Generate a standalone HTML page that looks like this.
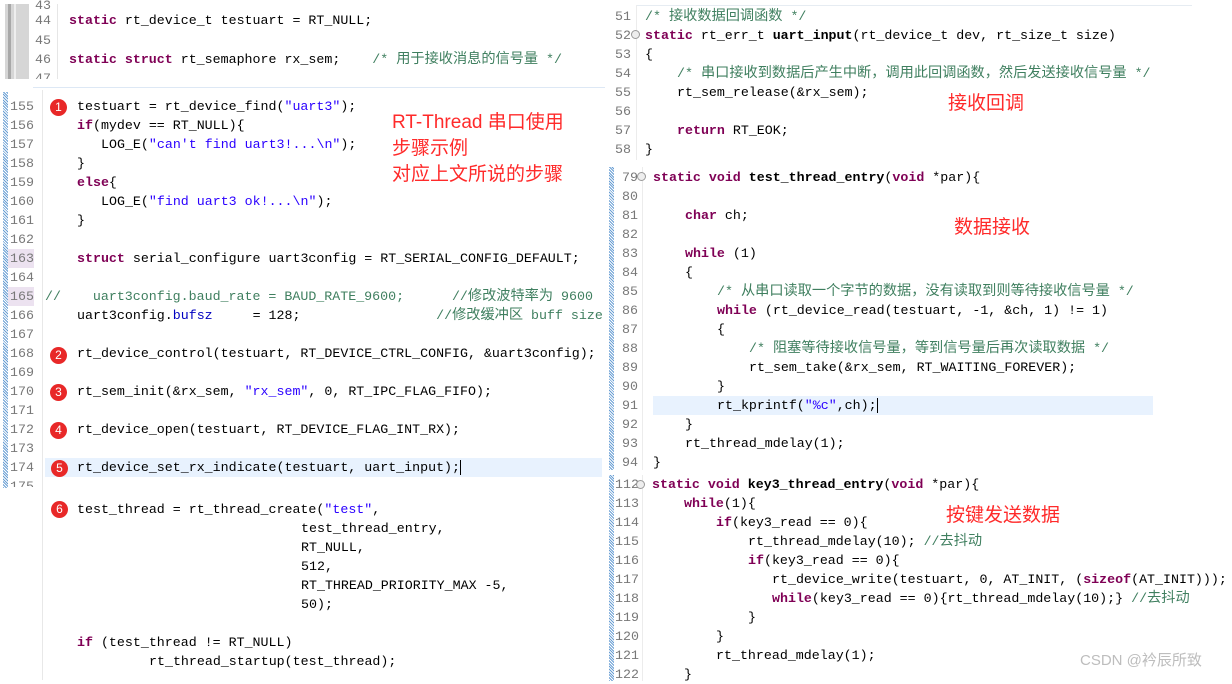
<!DOCTYPE html>
<html><head><meta charset="utf-8"><style>
html{background:#fff}
body{margin:0;width:1232px;height:680px;background:#fff;position:relative;top:1px;overflow:hidden;font-family:"Liberation Mono","Noto Sans CJK SC",monospace}
.l{position:absolute;white-space:pre;font-size:13.3px;line-height:19px;color:#000;height:19px}
.n{position:absolute;white-space:pre;font-size:13.3px;line-height:19px;color:#787878}
.k{color:#7f0055;font-weight:bold}
.s{color:#2a00ff}
.c{color:#3f7f5f;font-family:"Liberation Mono","Noto Sans CJK SC",monospace}
.c i{font-style:normal;font-size:14.2px}
.f{color:#0000c0}
.b{font-weight:bold}
.r{position:absolute;color:#ff2a2a;font-family:"Liberation Sans","Noto Sans CJK SC",sans-serif;font-size:19px;line-height:25px;white-space:pre}
.dot{position:absolute;width:17px;height:17px;border-radius:50%;background:#e82828;color:#fff;font:12px/17px "Liberation Sans",sans-serif;text-align:center}
.gut{position:absolute;background:repeating-linear-gradient(45deg,#6a9fd4 0 1px,#fff 1px 2px)}
.hl{position:absolute;background:#e8f2fe}
</style></head><body>
<!-- top-left panel -->
<div style="position:absolute;left:5px;top:3px;width:24px;height:75px;background:#d6d6d6"></div>
<div style="position:absolute;left:8px;top:3px;width:3px;height:75px;background:#a8a8a8"></div>
<div style="position:absolute;left:14px;top:3px;width:2px;height:75px;background:#eee"></div>
<div style="position:absolute;left:57px;top:3px;width:1px;height:75px;background:#e6e6e6"></div>
<div class="n" style="top:-5px;left:35px">43</div>
<div class="n" style="top:10px;left:35px">44</div><div class="l" style="top:10px;left:69px"><span class="k">static</span> rt_device_t testuart = RT_NULL;</div>
<div class="n" style="top:30px;left:35px">45</div>
<div class="n" style="top:49px;left:35px">46</div><div class="l" style="top:49px;left:69px"><span class="k">static struct</span> rt_semaphore rx_sem;    <span class="c">/* <i>用于接收消息的信号量</i> */</span></div>
<div class="n" style="top:68px;left:35px">47</div>
<div style="position:absolute;left:0;top:78px;width:600px;height:8px;background:#fff"></div>
<div style="position:absolute;left:33px;top:86px;width:572px;height:1px;background:#dde8f5"></div>
<!-- bottom-left panel -->
<div class="gut" style="left:3px;top:91px;width:5px;height:396px"></div>
<div style="position:absolute;left:42px;top:89px;width:1px;height:590px;background:#e8e8e8"></div>
<div style="position:absolute;left:8px;top:248px;width:26px;height:19px;background:#ece2f0"></div>
<div style="position:absolute;left:8px;top:286px;width:26px;height:19px;background:#ece2f0"></div>
<div class="hl" style="left:45px;top:457px;width:557px;height:19px"></div>
<div class="n" style="top:96px;left:10px">155</div>
<div class="n" style="top:115px;left:10px">156</div>
<div class="n" style="top:134px;left:10px">157</div>
<div class="n" style="top:153px;left:10px">158</div>
<div class="n" style="top:172px;left:10px">159</div>
<div class="n" style="top:191px;left:10px">160</div>
<div class="n" style="top:210px;left:10px">161</div>
<div class="n" style="top:229px;left:10px">162</div>
<div class="n" style="top:248px;left:10px">163</div>
<div class="n" style="top:267px;left:10px">164</div>
<div class="n" style="top:286px;left:10px">165</div>
<div class="n" style="top:305px;left:10px">166</div>
<div class="n" style="top:324px;left:10px">167</div>
<div class="n" style="top:343px;left:10px">168</div>
<div class="n" style="top:362px;left:10px">169</div>
<div class="n" style="top:381px;left:10px">170</div>
<div class="n" style="top:400px;left:10px">171</div>
<div class="n" style="top:419px;left:10px">172</div>
<div class="n" style="top:438px;left:10px">173</div>
<div class="n" style="top:457px;left:10px">174</div>
<div class="n" style="top:476px;left:10px;height:10px;overflow:hidden">175</div>
<div class="l" style="top:96px;left:77px">testuart = rt_device_find(<span class="s">"uart3"</span>);</div>
<div class="l" style="top:115px;left:77px"><span class="k">if</span>(mydev == RT_NULL){</div>
<div class="l" style="top:134px;left:101px">LOG_E(<span class="s">"can't find uart3!...\n"</span>);</div>
<div class="l" style="top:153px;left:77px">}</div>
<div class="l" style="top:172px;left:77px"><span class="k">else</span>{</div>
<div class="l" style="top:191px;left:101px">LOG_E(<span class="s">"find uart3 ok!...\n"</span>);</div>
<div class="l" style="top:210px;left:77px">}</div>
<div class="l" style="top:248px;left:77px"><span class="k">struct</span> serial_configure uart3config = RT_SERIAL_CONFIG_DEFAULT;</div>
<div class="l" style="top:286px;left:45px"><span class="c">//    uart3config.baud_rate = BAUD_RATE_9600;      //<i>修改波特率为</i> 9600</span></div>
<div class="l" style="top:305px;left:77px">uart3config.<span class="f">bufsz</span>     = 128;                 <span class="c">//<i>修改缓冲区</i> buff size</span></div>
<div class="l" style="top:343px;left:77px">rt_device_control(testuart, RT_DEVICE_CTRL_CONFIG, &amp;uart3config);</div>
<div class="l" style="top:381px;left:77px">rt_sem_init(&amp;rx_sem, <span class="s">"rx_sem"</span>, 0, RT_IPC_FLAG_FIFO);</div>
<div class="l" style="top:419px;left:77px">rt_device_open(testuart, RT_DEVICE_FLAG_INT_RX);</div>
<div class="l" style="top:457px;left:77px">rt_device_set_rx_indicate(testuart, uart_input);<span style="border-left:1px solid #000"></span></div>
<div class="l" style="top:499px;left:77px">test_thread = rt_thread_create(<span class="s">"test"</span>,</div>
<div class="l" style="top:518px;left:301px">test_thread_entry,</div>
<div class="l" style="top:537px;left:301px">RT_NULL,</div>
<div class="l" style="top:556px;left:301px">512,</div>
<div class="l" style="top:575px;left:301px">RT_THREAD_PRIORITY_MAX -5,</div>
<div class="l" style="top:594px;left:301px">50);</div>
<div class="l" style="top:632px;left:77px"><span class="k">if</span> (test_thread != RT_NULL)</div>
<div class="l" style="top:651px;left:149px">rt_thread_startup(test_thread);</div>
<div style="position:absolute;left:602px;top:87px;width:6px;height:400px;background:#fff"></div>
<div class="dot" style="left:50px;top:98px">1</div>
<div class="dot" style="left:50px;top:346px">2</div>
<div class="dot" style="left:50px;top:383px">3</div>
<div class="dot" style="left:50px;top:421px">4</div>
<div class="dot" style="left:51px;top:459px">5</div>
<div class="dot" style="left:51px;top:500px">6</div>
<div class="r" style="left:392px;top:109px">RT-Thread 串口使用</div>
<div class="r" style="left:392px;top:135px">步骤示例</div>
<div class="r" style="left:392px;top:161px">对应上文所说的步骤</div>
<!-- right top panel -->
<div style="position:absolute;left:606px;top:-1px;width:12px;height:160px;background:#fff"></div>
<div style="position:absolute;left:637px;top:4px;width:555px;height:1px;background:#e6ecf2"></div>
<div style="position:absolute;left:636px;top:4px;width:1px;height:155px;background:#ececec"></div>
<div class="n" style="top:6px;left:615px">51</div><div class="l" style="top:6px;left:645px"><span class="c">/* <i>接收数据回调函数</i> */</span></div>
<div class="n" style="top:25px;left:615px">52</div><div style="position:absolute;left:631px;top:29px;width:7px;height:7px;border:1px solid #999;border-radius:50%;background:#eee"></div><div class="l" style="top:25px;left:645px"><span class="k">static</span> rt_err_t <span class="b">uart_input</span>(rt_device_t dev, rt_size_t size)</div>
<div class="n" style="top:44px;left:615px">53</div><div class="l" style="top:44px;left:645px">{</div>
<div class="n" style="top:63px;left:615px">54</div><div class="l" style="top:63px;left:677px"><span class="c">/* <i>串口接收到数据后产生中断，调用此回调函数，然后发送接收信号量</i> */</span></div>
<div class="n" style="top:82px;left:615px">55</div><div class="l" style="top:82px;left:677px">rt_sem_release(&amp;rx_sem);</div>
<div class="n" style="top:101px;left:615px">56</div>
<div class="n" style="top:120px;left:615px">57</div><div class="l" style="top:120px;left:677px"><span class="k">return</span> RT_EOK;</div>
<div class="n" style="top:139px;left:615px">58</div><div class="l" style="top:139px;left:645px">}</div>
<div class="r" style="left:948px;top:90px">接收回调</div>
<!-- right middle panel -->
<div class="gut" style="left:609px;top:166px;width:5px;height:303px"></div>
<div style="position:absolute;left:642px;top:166px;width:1px;height:303px;background:#ececec"></div>
<div class="hl" style="left:653px;top:395px;width:500px;height:19px"></div>
<div class="n" style="top:167px;left:622px">79</div><div style="position:absolute;left:637px;top:171px;width:7px;height:7px;border:1px solid #999;border-radius:50%;background:#eee"></div><div class="l" style="top:167px;left:653px"><span class="k">static void</span> <span class="b">test_thread_entry</span>(<span class="k">void</span> *par){</div>
<div class="n" style="top:186px;left:622px">80</div>
<div class="n" style="top:205px;left:622px">81</div><div class="l" style="top:205px;left:685px"><span class="k">char</span> ch;</div>
<div class="n" style="top:224px;left:622px">82</div>
<div class="n" style="top:243px;left:622px">83</div><div class="l" style="top:243px;left:685px"><span class="k">while</span> (1)</div>
<div class="n" style="top:262px;left:622px">84</div><div class="l" style="top:262px;left:685px">{</div>
<div class="n" style="top:281px;left:622px">85</div><div class="l" style="top:281px;left:717px"><span class="c">/* <i>从串口读取一个字节的数据，没有读取到则等待接收信号量</i> */</span></div>
<div class="n" style="top:300px;left:622px">86</div><div class="l" style="top:300px;left:717px"><span class="k">while</span> (rt_device_read(testuart, -1, &amp;ch, 1) != 1)</div>
<div class="n" style="top:319px;left:622px">87</div><div class="l" style="top:319px;left:717px">{</div>
<div class="n" style="top:338px;left:622px">88</div><div class="l" style="top:338px;left:749px"><span class="c">/* <i>阻塞等待接收信号量，等到信号量后再次读取数据</i> */</span></div>
<div class="n" style="top:357px;left:622px">89</div><div class="l" style="top:357px;left:749px">rt_sem_take(&amp;rx_sem, RT_WAITING_FOREVER);</div>
<div class="n" style="top:376px;left:622px">90</div><div class="l" style="top:376px;left:717px">}</div>
<div class="n" style="top:395px;left:622px">91</div><div class="l" style="top:395px;left:717px">rt_kprintf(<span class="s">"%c"</span>,ch);<span style="border-left:1px solid #000"></span></div>
<div class="n" style="top:414px;left:622px">92</div><div class="l" style="top:414px;left:685px">}</div>
<div class="n" style="top:433px;left:622px">93</div><div class="l" style="top:433px;left:685px">rt_thread_mdelay(1);</div>
<div class="n" style="top:452px;left:622px">94</div><div class="l" style="top:452px;left:653px">}</div>
<div class="r" style="left:954px;top:214px">数据接收</div>
<!-- right bottom panel -->
<div class="gut" style="left:609px;top:474px;width:5px;height:206px"></div>
<div style="position:absolute;left:642px;top:474px;width:1px;height:206px;background:#ececec"></div>
<div class="n" style="top:474px;left:615px">112</div><div style="position:absolute;left:636px;top:479px;width:7px;height:7px;border:1px solid #999;border-radius:50%;background:#eee"></div><div class="l" style="top:474px;left:652px"><span class="k">static void</span> <span class="b">key3_thread_entry</span>(<span class="k">void</span> *par){</div>
<div class="n" style="top:493px;left:615px">113</div><div class="l" style="top:493px;left:684px"><span class="k">while</span>(1){</div>
<div class="n" style="top:512px;left:615px">114</div><div class="l" style="top:512px;left:716px"><span class="k">if</span>(key3_read == 0){</div>
<div class="n" style="top:531px;left:615px">115</div><div class="l" style="top:531px;left:748px">rt_thread_mdelay(10); <span class="c">//<i>去抖动</i></span></div>
<div class="n" style="top:550px;left:615px">116</div><div class="l" style="top:550px;left:748px"><span class="k">if</span>(key3_read == 0){</div>
<div class="n" style="top:569px;left:615px">117</div><div class="l" style="top:569px;left:772px">rt_device_write(testuart, 0, AT_INIT, (<span class="k">sizeof</span>(AT_INIT)));</div>
<div class="n" style="top:588px;left:615px">118</div><div class="l" style="top:588px;left:772px"><span class="k">while</span>(key3_read == 0){rt_thread_mdelay(10);} <span class="c">//<i>去抖动</i></span></div>
<div class="n" style="top:607px;left:615px">119</div><div class="l" style="top:607px;left:748px">}</div>
<div class="n" style="top:626px;left:615px">120</div><div class="l" style="top:626px;left:716px">}</div>
<div class="n" style="top:645px;left:615px">121</div><div class="l" style="top:645px;left:716px">rt_thread_mdelay(1);</div>
<div class="n" style="top:664px;left:615px">122</div><div class="l" style="top:664px;left:684px">}</div>
<div class="r" style="left:946px;top:502px">按键发送数据</div>
<div style="position:absolute;left:1080px;top:650px;color:#bdbdbd;font:15px/20px 'Liberation Sans','Noto Sans CJK SC',sans-serif;white-space:pre">CSDN @衿辰所致</div>
</body></html>
